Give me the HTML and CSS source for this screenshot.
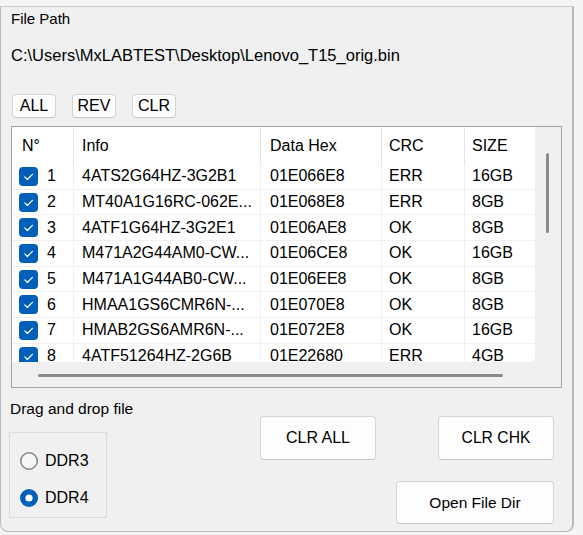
FILE: index.html
```html
<!DOCTYPE html>
<html>
<head>
<meta charset="utf-8">
<link rel="stylesheet" href="styles.css">
</head>
<body>
<div class="window">
  <div class="title">File Path</div>
  <div class="path">C:\Users\MxLABTEST\Desktop\Lenovo_T15_orig.bin</div>
  <div class="toolbar">
    <button class="btn sbtn">ALL</button>
    <button class="btn sbtn">REV</button>
    <button class="btn sbtn">CLR</button>
  </div>
  <div class="listbox">
    <div class="content">
      <div class="row head">
        <div class="c c1">N°</div><div class="c c2">Info</div><div class="c c3">Data Hex</div><div class="c c4">CRC</div><div class="c c5">SIZE</div>
      </div>
      <div class="row">
        <div class="c c1"><span class="chk"><svg viewBox="0 0 19 19" width="19" height="19"><path d="M5.8 9.9l2.6 2.6 5-5.2" fill="none" stroke="#fff" stroke-width="1.2" stroke-linecap="round" stroke-linejoin="round"/></svg></span><span class="num">1</span></div>
        <div class="c c2">4ATS2G64HZ-3G2B1</div><div class="c c3">01E066E8</div><div class="c c4">ERR</div><div class="c c5">16GB</div>
      </div>
      <div class="row">
        <div class="c c1"><span class="chk"><svg viewBox="0 0 19 19" width="19" height="19"><path d="M5.8 9.9l2.6 2.6 5-5.2" fill="none" stroke="#fff" stroke-width="1.2" stroke-linecap="round" stroke-linejoin="round"/></svg></span><span class="num">2</span></div>
        <div class="c c2">MT40A1G16RC-062E...</div><div class="c c3">01E068E8</div><div class="c c4">ERR</div><div class="c c5">8GB</div>
      </div>
      <div class="row">
        <div class="c c1"><span class="chk"><svg viewBox="0 0 19 19" width="19" height="19"><path d="M5.8 9.9l2.6 2.6 5-5.2" fill="none" stroke="#fff" stroke-width="1.2" stroke-linecap="round" stroke-linejoin="round"/></svg></span><span class="num">3</span></div>
        <div class="c c2">4ATF1G64HZ-3G2E1</div><div class="c c3">01E06AE8</div><div class="c c4">OK</div><div class="c c5">8GB</div>
      </div>
      <div class="row">
        <div class="c c1"><span class="chk"><svg viewBox="0 0 19 19" width="19" height="19"><path d="M5.8 9.9l2.6 2.6 5-5.2" fill="none" stroke="#fff" stroke-width="1.2" stroke-linecap="round" stroke-linejoin="round"/></svg></span><span class="num">4</span></div>
        <div class="c c2">M471A2G44AM0-CW...</div><div class="c c3">01E06CE8</div><div class="c c4">OK</div><div class="c c5">16GB</div>
      </div>
      <div class="row">
        <div class="c c1"><span class="chk"><svg viewBox="0 0 19 19" width="19" height="19"><path d="M5.8 9.9l2.6 2.6 5-5.2" fill="none" stroke="#fff" stroke-width="1.2" stroke-linecap="round" stroke-linejoin="round"/></svg></span><span class="num">5</span></div>
        <div class="c c2">M471A1G44AB0-CW...</div><div class="c c3">01E06EE8</div><div class="c c4">OK</div><div class="c c5">8GB</div>
      </div>
      <div class="row">
        <div class="c c1"><span class="chk"><svg viewBox="0 0 19 19" width="19" height="19"><path d="M5.8 9.9l2.6 2.6 5-5.2" fill="none" stroke="#fff" stroke-width="1.2" stroke-linecap="round" stroke-linejoin="round"/></svg></span><span class="num">6</span></div>
        <div class="c c2">HMAA1GS6CMR6N-...</div><div class="c c3">01E070E8</div><div class="c c4">OK</div><div class="c c5">8GB</div>
      </div>
      <div class="row">
        <div class="c c1"><span class="chk"><svg viewBox="0 0 19 19" width="19" height="19"><path d="M5.8 9.9l2.6 2.6 5-5.2" fill="none" stroke="#fff" stroke-width="1.2" stroke-linecap="round" stroke-linejoin="round"/></svg></span><span class="num">7</span></div>
        <div class="c c2">HMAB2GS6AMR6N-...</div><div class="c c3">01E072E8</div><div class="c c4">OK</div><div class="c c5">16GB</div>
      </div>
      <div class="row">
        <div class="c c1"><span class="chk"><svg viewBox="0 0 19 19" width="19" height="19"><path d="M5.8 9.9l2.6 2.6 5-5.2" fill="none" stroke="#fff" stroke-width="1.2" stroke-linecap="round" stroke-linejoin="round"/></svg></span><span class="num">8</span></div>
        <div class="c c2">4ATF51264HZ-2G6B</div><div class="c c3">01E22680</div><div class="c c4">ERR</div><div class="c c5">4GB</div>
      </div>
    </div>
    <div class="vscroll"><div class="vthumb"></div></div>
    <div class="hscroll"><div class="hthumb"></div></div>
  </div>
  <div class="bottom">
    <div class="left">
      <div class="drag">Drag and drop file</div>
      <div class="group">
        <div class="radio">
          <svg viewBox="0 0 18 18" width="18" height="18"><circle cx="9" cy="9" r="8.25" fill="#f6f6f6" stroke="#858585" stroke-width="1.5"/></svg>
          <span>DDR3</span>
        </div>
        <div class="radio">
          <svg viewBox="0 0 18 18" width="18" height="18"><circle cx="9" cy="9" r="9" fill="#005fb8"/><circle cx="9" cy="9" r="3.6" fill="#fff"/></svg>
          <span>DDR4</span>
        </div>
      </div>
    </div>
    <button class="btn clrall">CLR ALL</button>
    <div class="right">
      <button class="btn clrchk">CLR CHK</button>
      <button class="btn openbtn">Open File Dir</button>
    </div>
  </div>
</div>
</body>
</html>
```
FILE: styles.css
```css
html, body {
  margin: 0;
  padding: 0;
}
body {
  background: #f4f4f4;
  width: 583px;
  height: 535px;
  overflow: hidden;
  font-family: "Liberation Sans", Arial, sans-serif;
  color: #000;
}
.window {
  box-sizing: border-box;
  margin-top: 6px;
  width: 574px;
  height: 526px;
  background: #f0f0f0;
  border-top: 1px solid #cacaca;
  border-left: 1px solid #bcbcbc;
  border-right: 2px solid #bababa;
  border-bottom: 1px solid #bababa;
  border-radius: 0 0 8px 8px;
  padding: 0 10px 0 10px;
}
.title {
  margin-top: 3px;
  font-size: 15px;
  line-height: 17px;
}
.path {
  margin-top: 19px;
  font-size: 16.5px;
  line-height: 19px;
}
.toolbar {
  margin-top: 29px;
  margin-left: 1px;
  display: flex;
  gap: 16px;
  height: 24px;
}
.btn {
  box-sizing: border-box;
  margin: 0;
  padding: 0;
  font-family: "Liberation Sans", Arial, sans-serif;
  color: #000;
  background: #fdfdfd;
  border: 1px solid #d3d3d3;
  border-bottom-color: #c4c4c4;
  border-radius: 4px;
  display: flex;
  align-items: center;
  justify-content: center;
}
.sbtn {
  width: 44px;
  height: 24px;
  font-size: 16px;
}
.listbox {
  margin-top: 8px;
  box-sizing: border-box;
  width: 551px;
  height: 262px;
  border: 1px solid #a3a3a3;
  background: #f0f0f0;
  display: grid;
  grid-template-columns: 523px 26px;
  grid-template-rows: 235px 25px;
}
.content {
  background: #fff;
  overflow: hidden;
  border-bottom-right-radius: 5px;
}
.row {
  box-sizing: border-box;
  display: grid;
  grid-template-columns: 62px 187px 121px 83px 1fr;
  height: 25.7px;
  border-bottom: 1px solid #f0f0f0;
  font-size: 16px;
  line-height: 18px;
}
.row.head {
  height: 37px;
  border-bottom: none;
  padding-top: 1px;
}
.c {
  display: flex;
  align-items: center;
  border-right: 1px solid #f0f0f0;
  white-space: nowrap;
  overflow: hidden;
}
.head .c {
  border-right-color: #e4e4e4;
}
.c5 { border-right: none; }
.head .c5 { border-right: none; }
.c1 { padding-left: 10px; }
.c2 { padding-left: 8px; }
.c3 { padding-left: 9px; }
.c4 { padding-left: 7px; }
.c5 { padding-left: 7px; }
.row:not(.head) .c1 { padding-left: 7px; }
.chk {
  width: 19px;
  height: 19px;
  border-radius: 4px;
  background: #005fb8;
  display: block;
  flex: none;
}
.chk svg { display: block; }
.num {
  margin-left: 9px;
}
.vthumb {
  margin-left: 11px;
  margin-top: 26px;
  width: 3px;
  height: 80px;
  border-radius: 2px;
  background: #8b8b8b;
}
.hscroll {
  grid-column: 1 / 3;
}
.hthumb {
  margin-left: 26px;
  margin-top: 12px;
  width: 465px;
  height: 3px;
  border-radius: 2px;
  background: #8b8b8b;
}
.bottom {
  display: flex;
  align-items: flex-start;
}
.left {
  margin-left: -2px;
  width: 98px;
}
.drag {
  margin-top: 12px;
  margin-left: 1px;
  font-size: 15.5px;
  line-height: 18px;
  white-space: nowrap;
}
.group {
  box-sizing: border-box;
  margin-top: 14px;
  height: 86px;
  border: 1px solid #dcdcdc;
  padding: 19px 0 0 10px;
}
.radio {
  display: flex;
  align-items: center;
  gap: 7px;
  height: 18px;
  font-size: 16px;
  line-height: 18px;
}
.radio svg { display: block; flex: none; }
.radio + .radio {
  margin-top: 19px;
}
.clrall {
  margin-left: 153px;
  margin-top: 28px;
  width: 116px;
  height: 44px;
  font-size: 16px;
}
.right {
  margin-left: auto;
  margin-right: 8px;
  display: flex;
  flex-direction: column;
  align-items: flex-end;
}
.clrchk {
  margin-top: 28px;
  width: 116px;
  height: 44px;
  font-size: 15.7px;
}
.openbtn {
  margin-top: 21px;
  width: 158px;
  height: 43px;
  font-size: 15.5px;
}
```
